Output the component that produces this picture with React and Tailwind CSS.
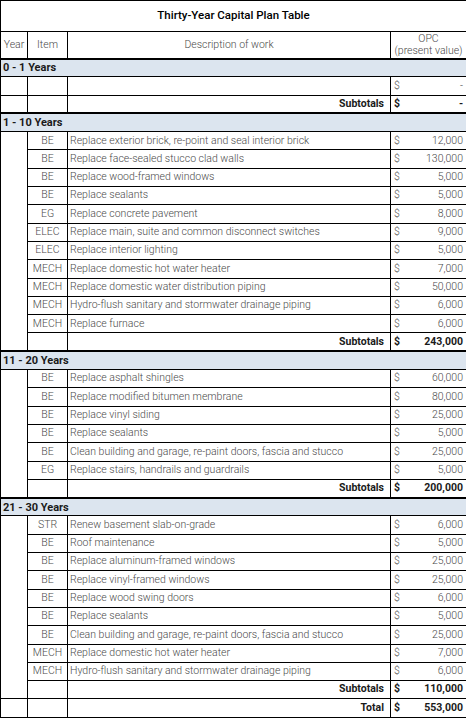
const sections = [
  {
    label: '0 - 1 Years',
    merged: false,
    rows: [{ item: '', desc: '', amt: '-' }],
    subtotal: '-',
  },
  {
    label: '1 - 10 Years',
    merged: true,
    rows: [
      { item: 'BE', desc: 'Replace exterior brick, re-point and seal interior brick', amt: '12,000' },
      { item: 'BE', desc: 'Replace face-sealed stucco clad walls', amt: '130,000' },
      { item: 'BE', desc: 'Replace wood-framed windows', amt: '5,000' },
      { item: 'BE', desc: 'Replace sealants', amt: '5,000' },
      { item: 'EG', desc: 'Replace concrete pavement', amt: '8,000' },
      { item: 'ELEC', desc: 'Replace main, suite and common disconnect switches', amt: '9,000' },
      { item: 'ELEC', desc: 'Replace interior lighting', amt: '5,000' },
      { item: 'MECH', desc: 'Replace domestic hot water heater', amt: '7,000' },
      { item: 'MECH', desc: 'Replace domestic water distribution piping', amt: '50,000' },
      { item: 'MECH', desc: 'Hydro-flush sanitary and stormwater drainage piping', amt: '6,000' },
      { item: 'MECH', desc: 'Replace furnace', amt: '6,000' },
    ],
    subtotal: '243,000',
  },
  {
    label: '11 - 20 Years',
    merged: true,
    rows: [
      { item: 'BE', desc: 'Replace asphalt shingles', amt: '60,000' },
      { item: 'BE', desc: 'Replace modified bitumen membrane', amt: '80,000' },
      { item: 'BE', desc: 'Replace vinyl siding', amt: '25,000' },
      { item: 'BE', desc: 'Replace sealants', amt: '5,000' },
      { item: 'BE', desc: 'Clean building and garage, re-paint doors, fascia and stucco', amt: '25,000' },
      { item: 'EG', desc: 'Replace stairs, handrails and guardrails', amt: '5,000' },
    ],
    subtotal: '200,000',
  },
  {
    label: '21 - 30 Years',
    merged: true,
    rows: [
      { item: 'STR', desc: 'Renew basement slab-on-grade', amt: '6,000' },
      { item: 'BE', desc: 'Roof maintenance', amt: '5,000' },
      { item: 'BE', desc: 'Replace aluminum-framed windows', amt: '25,000' },
      { item: 'BE', desc: 'Replace vinyl-framed windows', amt: '25,000' },
      { item: 'BE', desc: 'Replace wood swing doors', amt: '6,000' },
      { item: 'BE', desc: 'Replace sealants', amt: '5,000' },
      { item: 'BE', desc: 'Clean building and garage, re-paint doors, fascia and stucco', amt: '25,000' },
      { item: 'MECH', desc: 'Replace domestic hot water heater', amt: '7,000' },
      { item: 'MECH', desc: 'Hydro-flush sanitary and stormwater drainage piping', amt: '6,000' },
    ],
    subtotal: '110,000',
  },
];

const cell = 'border border-black p-0';

function Money({ value, bold }) {
  return (
    <div className={`flex justify-between px-[3px] ${bold ? 'font-bold text-[#1a1a1a]' : ''}`}>
      <span>$</span>
      <span>{value}</span>
    </div>
  );
}

function Section({ s }) {
  const span = s.rows.length + 1;
  return (
    <>
      <tr className="h-[18.3px] bg-[#dce5ef]">
        <td colSpan={4} className={`${cell} border-t-2 px-[2px] font-bold text-[11px] text-[#1a1a1a]`}>
          {s.label}
        </td>
      </tr>
      {s.rows.map((r, i) => (
        <tr key={i} className="h-[18.3px]">
          {(!s.merged || i === 0) && <td rowSpan={s.merged ? span : 1} className={cell}></td>}
          <td className={`${cell} text-center`}>{r.item}</td>
          <td className={`${cell} px-[2px] whitespace-nowrap`}>{r.desc}</td>
          <td className={cell}>
            <Money value={r.amt} />
          </td>
        </tr>
      ))}
      <tr className="h-[18.3px]">
        {!s.merged && <td className={cell}></td>}
        <td className={cell}></td>
        <td className={`${cell} text-right pr-[6px] font-bold text-[#1a1a1a]`}>Subtotals</td>
        <td className={cell}>
          <Money value={s.subtotal} bold />
        </td>
      </tr>
    </>
  );
}

export default function App() {
  return (
    <div className="bg-white w-[466px] min-h-[720px]" style={{ fontFamily: 'Roboto, "Liberation Sans", sans-serif' }}>
      <table className="table-fixed border-collapse w-[466px] text-[10.5px] font-light text-[#4a4a4a] leading-none">
        <colgroup>
          <col className="w-[27px]" />
          <col className="w-[40px]" />
          <col className="w-[323px]" />
          <col className="w-[76px]" />
        </colgroup>
        <tbody>
          <tr className="h-[31px]">
            <td colSpan={4} className={`${cell} text-center text-[11.5px] font-medium text-black`}>
              Thirty-Year Capital Plan Table
            </td>
          </tr>
          <tr className="h-[27px]">
            <td className={`${cell} text-center`}>Year</td>
            <td className={`${cell} text-center`}>Item</td>
            <td className={`${cell} text-center`}>Description of work</td>
            <td className={`${cell} text-center leading-[12px]`}>
              OPC
              <br />
              (present value)
            </td>
          </tr>
          {sections.map((s) => (
            <Section key={s.label} s={s} />
          ))}
          <tr className="h-[18.3px]">
            <td className={cell}></td>
            <td className={cell}></td>
            <td className={`${cell} text-right pr-[6px] font-bold text-[#1a1a1a]`}>Total</td>
            <td className={cell}>
              <Money value="553,000" bold />
            </td>
          </tr>
        </tbody>
      </table>
    </div>
  );
}
